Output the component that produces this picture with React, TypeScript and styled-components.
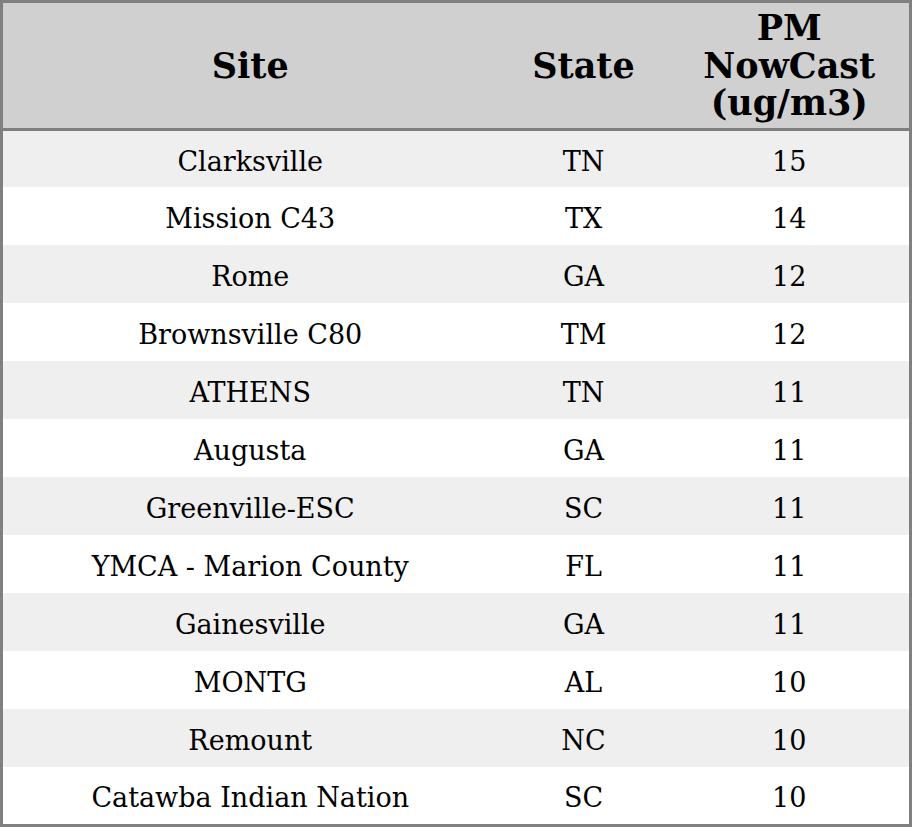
import styled, { createGlobalStyle } from 'styled-components'

const rows = [
    ['Clarksville', 'TN', '15'],
    ['Mission C43', 'TX', '14'],
    ['Rome', 'GA', '12'],
    ['Brownsville C80', 'TM', '12'],
    ['ATHENS', 'TN', '11'],
    ['Augusta', 'GA', '11'],
    ['Greenville-ESC', 'SC', '11'],
    ['YMCA - Marion County', 'FL', '11'],
    ['Gainesville', 'GA', '11'],
    ['MONTG', 'AL', '10'],
    ['Remount', 'NC', '10'],
    ['Catawba Indian Nation', 'SC', '10'],
]

const App = () => {
    return (
        <>
            <GlobalStyle />
            <Table>
                <colgroup>
                    <SiteCol />
                    <StateCol />
                    <col />
                </colgroup>
                <thead>
                    <HeadRow>
                        <Th>Site</Th>
                        <Th>State</Th>
                        <Th>
                            PM
                            <br />
                            NowCast
                            <br />
                            (ug/m3)
                        </Th>
                    </HeadRow>
                </thead>
                <tbody>
                    {rows.map(([site, state, value], i) => (
                        <Row key={site} $shaded={i % 2 === 0}>
                            <Td>{site}</Td>
                            <Td>{state}</Td>
                            <Td>{value}</Td>
                        </Row>
                    ))}
                </tbody>
            </Table>
        </>
    )
}

const GlobalStyle = createGlobalStyle`
    body {
        margin: 0;
        background: #ffffff;
        font-family: "DejaVu Serif", serif;
        color: #000000;
    }
`

const Table = styled.table`
    width: 912px;
    border-collapse: collapse;
    border: 3px solid #808080;
    table-layout: fixed;
`

const SiteCol = styled.col`
    width: 496px;
`

const StateCol = styled.col`
    width: 172px;
`

const HeadRow = styled.tr`
    height: 128px;
    background: #d0d0d0;
    border-bottom: 3px solid #808080;
`

const Th = styled.th`
    font-size: 35px;
    font-weight: bold;
    line-height: 37.5px;
    padding: 0 4px;
    text-align: center;
    vertical-align: middle;
`

const Row = styled.tr<{ $shaded: boolean }>`
    height: 58px;
    background: ${(p) => (p.$shaded ? '#efefef' : '#ffffff')};

    &:first-child {
        height: 57px;
    }

    &:last-child {
        height: 59px;
    }
`

const Td = styled.td`
    font-size: 27px;
    line-height: 31px;
    padding: 5px 4px 0;
    text-align: center;
    vertical-align: middle;
`

export default App
